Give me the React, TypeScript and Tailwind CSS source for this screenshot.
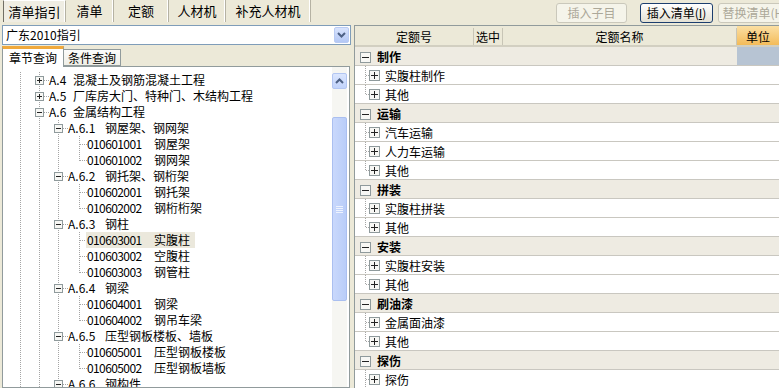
import React from "react"

type TreeNode = {
  level: 0 | 1 | 2
  code: string
  name: string
  open?: boolean
  last?: boolean
  selected?: boolean
}

const tree: TreeNode[] = [
  { level: 0, code: "A.4", name: "混凝土及钢筋混凝土工程" },
  { level: 0, code: "A.5", name: "厂库房大门、特种门、木结构工程" },
  { level: 0, code: "A.6", name: "金属结构工程", open: true },
  { level: 1, code: "A.6.1", name: "钢屋架、钢网架", open: true },
  { level: 2, code: "010601001", name: "钢屋架" },
  { level: 2, code: "010601002", name: "钢网架", last: true },
  { level: 1, code: "A.6.2", name: "钢托架、钢桁架", open: true },
  { level: 2, code: "010602001", name: "钢托架" },
  { level: 2, code: "010602002", name: "钢桁桁架", last: true },
  { level: 1, code: "A.6.3", name: "钢柱", open: true },
  { level: 2, code: "010603001", name: "实腹柱", selected: true },
  { level: 2, code: "010603002", name: "空腹柱" },
  { level: 2, code: "010603003", name: "钢管柱", last: true },
  { level: 1, code: "A.6.4", name: "钢梁", open: true },
  { level: 2, code: "010604001", name: "钢梁" },
  { level: 2, code: "010604002", name: "钢吊车梁", last: true },
  { level: 1, code: "A.6.5", name: "压型钢板楼板、墙板", open: true },
  { level: 2, code: "010605001", name: "压型钢板楼板" },
  { level: 2, code: "010605002", name: "压型钢板墙板", last: true },
  { level: 1, code: "A.6.6", name: "钢构件", open: true },
]

const groups = [
  { name: "制作", items: ["实腹柱制作", "其他"] },
  { name: "运输", items: ["汽车运输", "人力车运输", "其他"] },
  { name: "拼装", items: ["实腹柱拼装", "其他"] },
  { name: "安装", items: ["实腹柱安装", "其他"] },
  { name: "刷油漆", items: ["金属面油漆", "其他"] },
  { name: "探伤", items: ["探伤", "其他"] },
]

const DOT = "#a5a5a5"

function Box({ x, y, s, open }: { x: number; y: number; s: number; open?: boolean }) {
  const c = Math.floor(s / 2) + 0.5
  return (
    <g>
      <rect x={x + 0.5} y={y + 0.5} width={s - 1} height={s - 1} fill="#f7f7f4" stroke="#8f9a9c" />
      <line x1={x + 2} x2={x + s - 2} y1={y + c} y2={y + c} stroke="#222" />
      {!open && <line x1={x + c} x2={x + c} y1={y + 2} y2={y + s - 2} stroke="#222" />}
    </g>
  )
}

function VDot({ x, y1 = 0, y2 = 16 }: { x: number; y1?: number; y2?: number }) {
  return <line x1={x + 0.5} x2={x + 0.5} y1={y1} y2={y2} stroke={DOT} strokeDasharray="1 1" />
}

function HDot({ x1, x2, y }: { x1: number; x2: number; y: number }) {
  return <line x1={x1} x2={x2} y1={y + 0.5} y2={y + 0.5} stroke={DOT} strokeDasharray="1 1" />
}

function TreeLines({ node }: { node: TreeNode }) {
  const w = node.level === 0 ? 46 : node.level === 1 ? 65 : 84
  return (
    <svg width={w} height={16} className="shrink-0">
      <VDot x={17} />
      <VDot x={36} />
      {node.level === 0 && (
        <>
          <HDot x1={41} x2={46} y={8} />
          <Box x={32} y={4} s={9} open={node.open} />
        </>
      )}
      {node.level === 1 && (
        <>
          <VDot x={55} />
          <HDot x1={60} x2={65} y={8} />
          <Box x={51} y={4} s={9} open={node.open} />
        </>
      )}
      {node.level === 2 && (
        <>
          <VDot x={55} />
          <VDot x={76} y2={node.last ? 9 : 16} />
          <HDot x1={77} x2={84} y={8} />
        </>
      )}
    </svg>
  )
}

function TreeRow({ node }: { node: TreeNode }) {
  const codeW = node.level === 0 ? "w-[24px]" : node.level === 1 ? "w-[37px]" : "w-[67px] tracking-[-0.6px]"
  return (
    <div className="h-[16px] flex items-center whitespace-nowrap">
      <TreeLines node={node} />
      <span
        className={`h-[16px] flex items-center leading-[16px] ${node.selected ? "bg-[#ebe8dc] -ml-[1px] pl-[1px] pr-[5px]" : ""}`}
      >
        <span className={`inline-block ${codeW}`}>{node.code}</span>
        <span>{node.name}</span>
      </span>
    </div>
  )
}

function TopBar() {
  const tabs = [
    { label: "清单指引", w: "w-[63px]", active: true },
    { label: "清单", w: "w-[48px]" },
    { label: "定额", w: "w-[55px]" },
    { label: "人材机", w: "w-[57px]" },
    { label: "补充人材机", w: "w-[85px]" },
  ]
  return (
    <div className="h-[24px] flex items-start shrink-0 overflow-hidden">
      <div className="flex h-[22px] pl-[3px] shrink-0">
        {tabs.map((t) => (
          <div
            key={t.label}
            className={`${t.w} h-[22px] flex items-center justify-center text-[13px] border-r border-r-[#b5b2a3] shadow-[inset_-1px_0_0_#ffffff] ${
              t.active ? "border-l border-l-[#716f64] border-t border-t-[#ffffff] bg-[#efede3]" : ""
            }`}
          >
            {t.label}
          </div>
        ))}
      </div>
      <div className="flex items-center pt-[3px] ml-[245px] shrink-0">
        <div className="w-[71px] h-[20px] flex items-center justify-center border border-[#cac8bb] rounded-[3px] bg-[#f5f4ea] text-[#aca899]">
          插入子目
        </div>
        <div className="w-[73px] h-[20px] ml-[13px] flex items-center justify-center border border-[#1c3e6e] rounded-[3px] bg-gradient-to-b from-[#ffffff] to-[#e4e1d4]">
          插入清单(<span className="underline">I</span>)
        </div>
        <div className="w-[74px] h-[20px] ml-[5px] flex items-center justify-center border border-[#cac8bb] rounded-[3px] bg-[#f5f4ea] text-[#aca899]">
          替换清单(H)
        </div>
      </div>
    </div>
  )
}

function LeftPane() {
  return (
    <div className="w-[351px] shrink-0 flex flex-col pl-[2px]">
      {/* combobox */}
      <div className="mt-[1px] h-[20px] w-[349px] border border-[#7f9db9] bg-white flex items-center">
        <span className="pl-[3px] flex-1">广东2010指引</span>
        <div className="w-[15px] h-[16px] mr-[1px] rounded-[2px] bg-gradient-to-b from-[#d9e4fd] to-[#b4c8f5] border border-[#b9cbf3] flex items-center justify-center">
          <svg width="9" height="6" viewBox="0 0 9 6">
            <path d="M1 1 L4.5 4.5 L8 1" fill="none" stroke="#4d6185" strokeWidth="2" />
          </svg>
        </div>
      </div>

      {/* sub tabs */}
      <div className="h-[22px] flex items-end -mb-[1px] relative z-10">
        <div className="w-[62px] h-[21px] bg-white border-x border-[#919b9c] border-t-[3px] border-t-[#f0a93c] flex items-center justify-center">
          章节查询
        </div>
        <div className="w-[57px] h-[17px] mb-[1px] bg-gradient-to-b from-[#fcfcfb] to-[#efeee6] border border-[#919b9c] border-l-0 flex items-center justify-center">
          条件查询
        </div>
      </div>

      {/* tree */}
      <div className="flex-1 min-h-0 w-[348px] border border-[#919b9c] bg-white flex">
        <div className="flex-1 min-w-0 pt-[5px] overflow-hidden">
          {tree.map((n, i) => (
            <TreeRow key={i} node={n} />
          ))}
        </div>
        <div className="w-[15px] mr-[2px] pt-[6px] bg-[#f6f6f2] flex flex-col">
          <div className="h-[16px] rounded-[2px] border border-[#b3c6f2] bg-gradient-to-b from-[#dbe6fe] to-[#c1d3fb] flex items-center justify-center">
            <svg width="9" height="6" viewBox="0 0 9 6">
              <path d="M1 5 L4.5 1.5 L8 5" fill="none" stroke="#4d6185" strokeWidth="2" />
            </svg>
          </div>
          <div className="h-[28px]" />
          <div className="h-[184px] rounded-[2px] border border-[#aabff0] bg-gradient-to-r from-[#c9d8fc] to-[#b9cdf8] flex items-center justify-center">
            <div className="flex flex-col gap-[1px]">
              <div className="w-[7px] h-[1px] bg-[#eef3fe]" />
              <div className="w-[7px] h-[1px] bg-[#eef3fe]" />
              <div className="w-[7px] h-[1px] bg-[#eef3fe]" />
              <div className="w-[7px] h-[1px] bg-[#eef3fe]" />
            </div>
          </div>
        </div>
      </div>
    </div>
  )
}

function GroupRow({ name, first }: { name: string; first?: boolean }) {
  return (
    <div className="h-[19px] shrink-0 flex border-b border-[#c9c7c0] bg-[#eeebe2]">
      <div className="w-[382px] flex items-center pt-[1px]">
        <svg width={22} height={18} className="shrink-0">
          <Box x={5} y={4} s={11} open />
        </svg>
        <span className="font-bold">{name}</span>
      </div>
      <div className={`flex-1 ${first ? "bg-[#b7c4d3]" : ""}`} />
    </div>
  )
}

function ItemRow({ name, last }: { name: string; last?: boolean }) {
  return (
    <div className="h-[19px] shrink-0 flex items-center border-b border-[#c9c7c0] bg-white">
      <svg width={30} height={18} className="shrink-0">
        <line x1={10.5} x2={10.5} y1={0} y2={last ? 10 : 18} stroke={DOT} strokeDasharray="1 1" />
        <line x1={11} x2={14} y1={9.5} y2={9.5} stroke={DOT} strokeDasharray="1 1" />
        <Box x={14} y={4} s={11} />
      </svg>
      <span className="pt-[1px]">{name}</span>
    </div>
  )
}

function RightPane() {
  return (
    <div className="flex-1 min-w-0 mt-[1px] border-t border-l border-[#919b9c] bg-white flex flex-col overflow-hidden">
      <div className="h-[21px] shrink-0 flex bg-[#ece9d8] border-b-2 border-[#d2cfc1] pt-[2px]">
        <div className="w-[119px] flex items-center justify-center border-r border-[#c8c5b6]">定额号</div>
        <div className="w-[29px] flex items-center pl-[2px] border-r border-[#c8c5b6]">选中</div>
        <div className="w-[234px] flex items-center justify-center border-r border-[#c8c5b6]">定额名称</div>
        <div className="flex-1 -mt-[2px] pt-[2px] flex items-center justify-center bg-gradient-to-b from-[#fbdfa2] to-[#f3bb57]">单位</div>
      </div>
      {groups.map((g, gi) => (
        <React.Fragment key={g.name}>
          <GroupRow name={g.name} first={gi === 0} />
          {g.items.map((it, i) => (
            <ItemRow key={i} name={it} last={i === g.items.length - 1} />
          ))}
        </React.Fragment>
      ))}
    </div>
  )
}

export default function App() {
  return (
    <div className="w-[779px] h-[388px] overflow-hidden bg-[#ece9d8] font-['Noto_Sans_CJK_SC',sans-serif] text-[12px] leading-[16px] text-black flex flex-col select-none">
      <TopBar />
      <div className="flex flex-1 min-h-0">
        <LeftPane />
        <div className="w-[3px] shrink-0" />
        <RightPane />
      </div>
    </div>
  )
}
